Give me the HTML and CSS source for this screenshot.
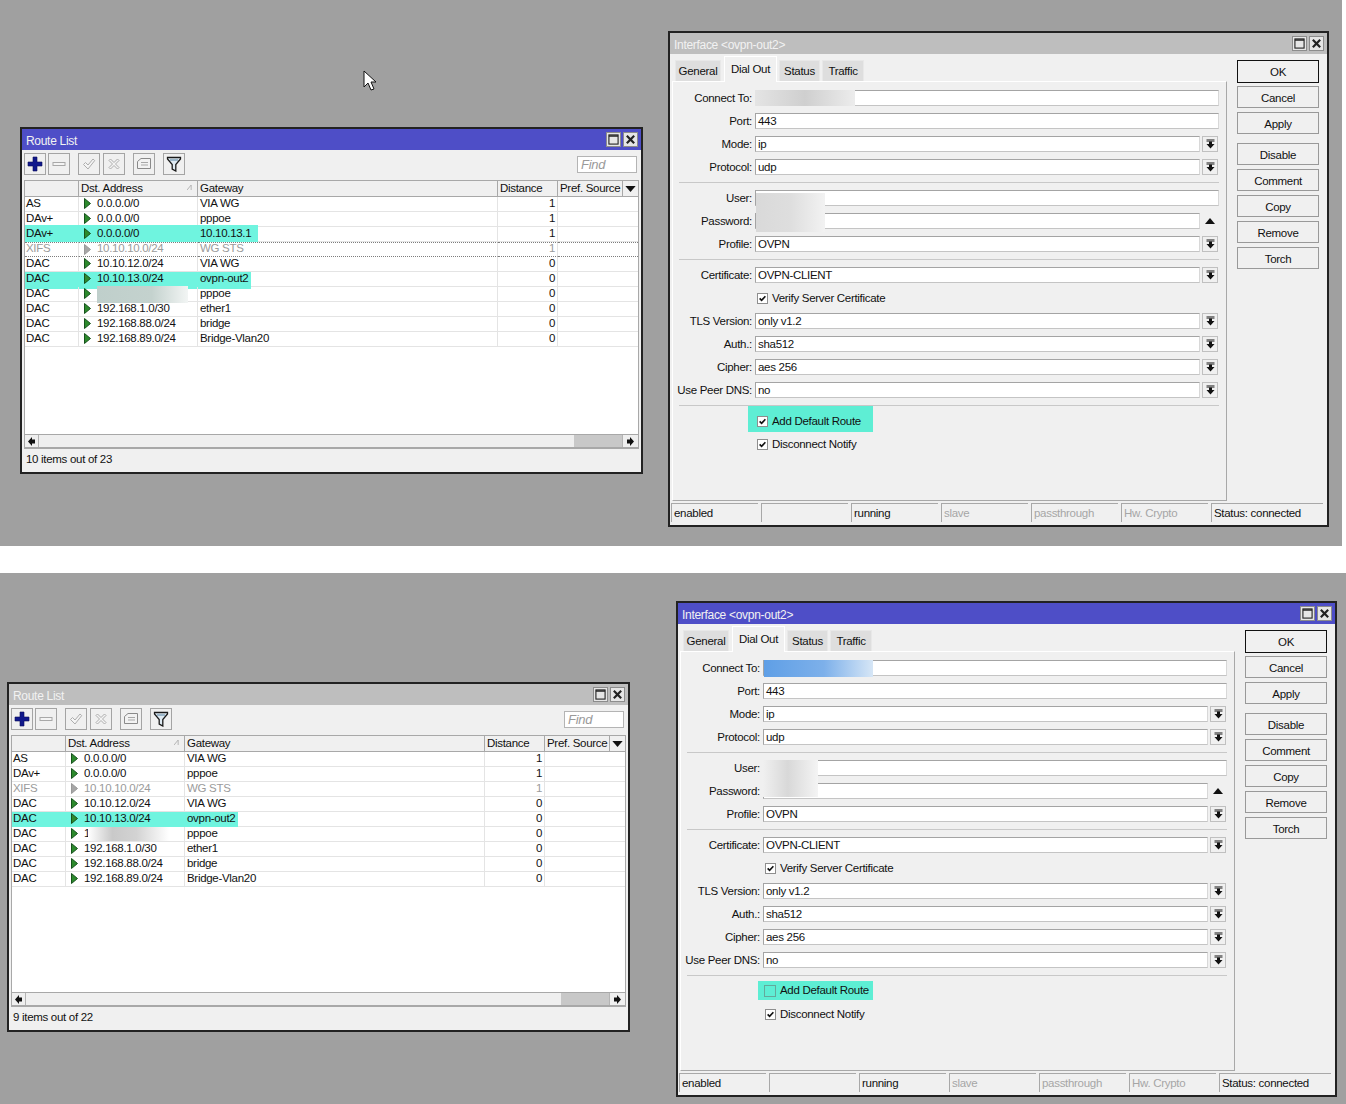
FILE: index.html
```html
<!DOCTYPE html>
<html lang="en">
<head>
<meta charset="utf-8">
<title>Route List and Interface ovpn-out2</title>
<link rel="stylesheet" href="styles.css">
</head>
<body>
<svg class="defs" aria-hidden="true">
  <symbol id="i-plus" viewBox="0 0 16 16"><path d="M6 1h4v5h5v4h-5v5H6v-5H1V6h5z" fill="#10188c" stroke="#0a0f5c" stroke-width=".6"/></symbol>
  <symbol id="i-minus" viewBox="0 0 16 16"><rect x="2" y="6.5" width="12" height="3" fill="#f4f4f4" stroke="#a8a8a8"/></symbol>
  <symbol id="i-check" viewBox="0 0 16 16"><path d="M2.5 8.5l2-2 2.5 2.5 5-6 1.7 1.6L7 13z" fill="#f4f4f4" stroke="#adadad"/></symbol>
  <symbol id="i-cross" viewBox="0 0 16 16"><path d="M3 4.5L4.5 3 8 6.5 11.5 3 13 4.5 9.5 8l3.5 3.5-1.5 1.5L8 9.5 4.5 13 3 11.5 6.5 8z" fill="#f4f4f4" stroke="#adadad"/></symbol>
  <symbol id="i-note" viewBox="0 0 16 16"><path d="M1.5 5.5L5 2.5h9.5v10h-13z" fill="#f2f2f2" stroke="#8a8a8a"/><path d="M5 6.5h7M5 9h7" stroke="#a8a8a8"/></symbol>
  <symbol id="i-filter" viewBox="0 0 16 16"><path d="M1.5 1.5h13v1.5L9.8 8.5v6.5L6.2 13V8.5L1.5 3z" fill="#dfeaf2" stroke="#1a1a1a" stroke-width="1.3"/><path d="M4 4h8" stroke="#6f93ad" stroke-width="1.2"/></symbol>
  <symbol id="i-run" viewBox="0 0 7 11"><path d="M.5.5l6 5-6 5z" fill="#2c8a2c" stroke="#17521d"/></symbol>
  <symbol id="i-rung" viewBox="0 0 7 11"><path d="M.5.5l6 5-6 5z" fill="#a6a6a6" stroke="#999"/></symbol>
  <symbol id="i-max" viewBox="0 0 12 12"><rect x="1" y="1" width="10" height="10" fill="none" stroke="#222" stroke-width="1.2"/><path d="M1 2.2h10" stroke="#222" stroke-width="1.6"/></symbol>
  <symbol id="i-close" viewBox="0 0 12 12"><path d="M2 2l8 8M10 2l-8 8" stroke="#222" stroke-width="2.4"/></symbol>
  <symbol id="i-drop" viewBox="0 0 9 10"><path d="M.5 0h8M.5 2h8" stroke="#111"/><path d="M3 2.5h3V5h2.5L4.5 9.5.5 5H3z" fill="#111"/></symbol>
  <symbol id="i-up" viewBox="0 0 10 6"><path d="M5 0l5 6H0z" fill="#111"/></symbol>
  <symbol id="i-down" viewBox="0 0 12 7"><path d="M0 0h12L6 7z" fill="#111"/></symbol>
  <symbol id="i-left" viewBox="0 0 7 9"><path d="M0 4.5L4 0v2.5h3v4H4V9z" fill="#111"/></symbol>
  <symbol id="i-right" viewBox="0 0 7 9"><path d="M7 4.5L3 0v2.5H0v4h3V9z" fill="#111"/></symbol>
  <symbol id="i-tick" viewBox="0 0 11 11"><path d="M2 5.3l2.4 2.5L9 2.8" fill="none" stroke="#111" stroke-width="2"/></symbol>
</svg>

<section class="desk desk-top">
  <svg class="cursor" viewBox="0 0 13 21" aria-hidden="true"><path d="M1 1v16l4-4 3 7 3-1-3-7h5z" fill="#fff" stroke="#111"/></svg>

  <div class="win route route-top">
    <header class="title active"><span>Route List</span><span class="title-btns"><i class="tb"><svg><use href="#i-max"/></svg></i><i class="tb"><svg><use href="#i-close"/></svg></i></span></header>
    <div class="toolbar">
      <button class="tool"><svg><use href="#i-plus"/></svg></button><button class="tool"><svg><use href="#i-minus"/></svg></button>
      <button class="tool g1"><svg><use href="#i-check"/></svg></button><button class="tool g1b"><svg><use href="#i-cross"/></svg></button>
      <button class="tool g2"><svg><use href="#i-note"/></svg></button><button class="tool g3"><svg><use href="#i-filter"/></svg></button>
      <span class="find">Find</span>
    </div>
    <div class="table">
      <div class="row head"><div></div><div class="c-dst">Dst. Address<svg class="sort" viewBox="0 0 6 6"><path d="M0 6L5 0v6" fill="none" stroke="#aaa"/></svg></div><div>Gateway</div><div>Distance</div><div>Pref. Source</div><div class="c-menu"><svg><use href="#i-down"/></svg></div></div>
      <div class="row"><div>AS</div><div class="c-dst"><svg class="run"><use href="#i-run"/></svg>0.0.0.0/0</div><div>VIA WG</div><div class="num">1</div><div></div></div>
      <div class="row"><div>DAv+</div><div class="c-dst"><svg class="run"><use href="#i-run"/></svg>0.0.0.0/0</div><div>pppoe</div><div class="num">1</div><div></div></div>
      <div class="row hl-up"><div class="hl">DAv+</div><div class="c-dst hl"><svg class="run"><use href="#i-run"/></svg>0.0.0.0/0</div><div><span class="hl gw-a">10.10.13.1</span></div><div class="num">1</div><div></div></div>
      <div class="row off dotted"><div>XIFS</div><div class="c-dst"><svg class="run"><use href="#i-rung"/></svg>10.10.10.0/24</div><div>WG STS</div><div class="num">1</div><div></div></div>
      <div class="row"><div>DAC</div><div class="c-dst"><svg class="run"><use href="#i-run"/></svg>10.10.12.0/24</div><div>VIA WG</div><div class="num">0</div><div></div></div>
      <div class="row hl-dn"><div class="hl">DAC</div><div class="c-dst hl"><svg class="run"><use href="#i-run"/></svg>10.10.13.0/24</div><div><span class="hl gw-b">ovpn-out2</span></div><div class="num">0</div><div></div></div>
      <div class="row"><div>DAC</div><div class="c-dst"><svg class="run"><use href="#i-run"/></svg><span class="smear smear-a"></span></div><div>pppoe</div><div class="num">0</div><div></div></div>
      <div class="row"><div>DAC</div><div class="c-dst"><svg class="run"><use href="#i-run"/></svg>192.168.1.0/30</div><div>ether1</div><div class="num">0</div><div></div></div>
      <div class="row"><div>DAC</div><div class="c-dst"><svg class="run"><use href="#i-run"/></svg>192.168.88.0/24</div><div>bridge</div><div class="num">0</div><div></div></div>
      <div class="row"><div>DAC</div><div class="c-dst"><svg class="run"><use href="#i-run"/></svg>192.168.89.0/24</div><div>Bridge-Vlan20</div><div class="num">0</div><div></div></div>
    </div>
    <div class="scroll"><i class="sb"><svg><use href="#i-left"/></svg></i><span class="track"></span><span class="thumb"></span><i class="sb"><svg><use href="#i-right"/></svg></i></div>
    <div class="foot">10 items out of 23</div>
  </div>

  <div class="win iface iface-top">
    <header class="title idle"><span>Interface &lt;ovpn-out2&gt;</span><span class="title-btns"><i class="tb"><svg><use href="#i-max"/></svg></i><i class="tb"><svg><use href="#i-close"/></svg></i></span></header>
    <div class="main">
      <div class="left">
        <nav class="tabs"><span class="tab t-gen">General</span><span class="tab cur">Dial Out</span><span class="tab t-st">Status</span><span class="tab t-tr">Traffic</span></nav>
        <div class="form">
          <div class="frow"><label>Connect To:</label><span class="field"></span></div>
          <div class="frow"><label>Port:</label><span class="field">443</span></div>
          <div class="frow"><label>Mode:</label><span class="field">ip</span><i class="dd"><svg><use href="#i-drop"/></svg></i></div>
          <div class="frow"><label>Protocol:</label><span class="field">udp</span><i class="dd"><svg><use href="#i-drop"/></svg></i></div>
          <hr class="sep">
          <div class="frow"><label>User:</label><span class="field"></span></div>
          <div class="frow"><label>Password:</label><span class="field"></span><i class="dd flat"><svg class="up"><use href="#i-up"/></svg></i></div>
          <div class="frow"><label>Profile:</label><span class="field">OVPN</span><i class="dd"><svg><use href="#i-drop"/></svg></i></div>
          <hr class="sep">
          <div class="frow"><label>Certificate:</label><span class="field">OVPN-CLIENT</span><i class="dd"><svg><use href="#i-drop"/></svg></i></div>
          <div class="frow check"><i class="box"><svg><use href="#i-tick"/></svg></i>Verify Server Certificate</div>
          <div class="frow"><label>TLS Version:</label><span class="field">only v1.2</span><i class="dd"><svg><use href="#i-drop"/></svg></i></div>
          <div class="frow"><label>Auth.:</label><span class="field">sha512</span><i class="dd"><svg><use href="#i-drop"/></svg></i></div>
          <div class="frow"><label>Cipher:</label><span class="field">aes 256</span><i class="dd"><svg><use href="#i-drop"/></svg></i></div>
          <div class="frow"><label>Use Peer DNS:</label><span class="field">no</span><i class="dd"><svg><use href="#i-drop"/></svg></i></div>
          <hr class="sep">
          <div class="frow check mark-big"><i class="box"><svg><use href="#i-tick"/></svg></i>Add Default Route</div>
          <div class="frow check"><i class="box"><svg><use href="#i-tick"/></svg></i>Disconnect Notify</div>
          <span class="smear smear-b"></span>
          <span class="smear smear-c"></span>
        </div>
      </div>
      <div class="side">
        <button class="btn ok">OK</button><button class="btn">Cancel</button><button class="btn gap-end">Apply</button>
        <button class="btn">Disable</button><button class="btn">Comment</button><button class="btn">Copy</button><button class="btn">Remove</button><button class="btn">Torch</button>
      </div>
    </div>
    <div class="status"><span>enabled</span><span></span><span>running</span><span class="dim">slave</span><span class="dim">passthrough</span><span class="dim">Hw. Crypto</span><span class="wide">Status: connected</span></div>
  </div>
</section>

<section class="desk desk-bottom">
  <div class="win route route-bottom">
    <header class="title idle"><span>Route List</span><span class="title-btns"><i class="tb"><svg><use href="#i-max"/></svg></i><i class="tb"><svg><use href="#i-close"/></svg></i></span></header>
    <div class="toolbar">
      <button class="tool"><svg><use href="#i-plus"/></svg></button><button class="tool"><svg><use href="#i-minus"/></svg></button>
      <button class="tool g1"><svg><use href="#i-check"/></svg></button><button class="tool g1b"><svg><use href="#i-cross"/></svg></button>
      <button class="tool g2"><svg><use href="#i-note"/></svg></button><button class="tool g3"><svg><use href="#i-filter"/></svg></button>
      <span class="find">Find</span>
    </div>
    <div class="table">
      <div class="row head"><div></div><div class="c-dst">Dst. Address<svg class="sort" viewBox="0 0 6 6"><path d="M0 6L5 0v6" fill="none" stroke="#aaa"/></svg></div><div>Gateway</div><div>Distance</div><div>Pref. Source</div><div class="c-menu"><svg><use href="#i-down"/></svg></div></div>
      <div class="row"><div>AS</div><div class="c-dst"><svg class="run"><use href="#i-run"/></svg>0.0.0.0/0</div><div>VIA WG</div><div class="num">1</div><div></div></div>
      <div class="row"><div>DAv+</div><div class="c-dst"><svg class="run"><use href="#i-run"/></svg>0.0.0.0/0</div><div>pppoe</div><div class="num">1</div><div></div></div>
      <div class="row off"><div>XIFS</div><div class="c-dst"><svg class="run"><use href="#i-rung"/></svg>10.10.10.0/24</div><div>WG STS</div><div class="num">1</div><div></div></div>
      <div class="row"><div>DAC</div><div class="c-dst"><svg class="run"><use href="#i-run"/></svg>10.10.12.0/24</div><div>VIA WG</div><div class="num">0</div><div></div></div>
      <div class="row"><div class="hl">DAC</div><div class="c-dst hl"><svg class="run"><use href="#i-run"/></svg>10.10.13.0/24</div><div><span class="hl gw-b">ovpn-out2</span></div><div class="num">0</div><div></div></div>
      <div class="row"><div>DAC</div><div class="c-dst"><svg class="run"><use href="#i-run"/></svg>1<span class="smear smear-d"></span></div><div>pppoe</div><div class="num">0</div><div></div></div>
      <div class="row"><div>DAC</div><div class="c-dst"><svg class="run"><use href="#i-run"/></svg>192.168.1.0/30</div><div>ether1</div><div class="num">0</div><div></div></div>
      <div class="row"><div>DAC</div><div class="c-dst"><svg class="run"><use href="#i-run"/></svg>192.168.88.0/24</div><div>bridge</div><div class="num">0</div><div></div></div>
      <div class="row"><div>DAC</div><div class="c-dst"><svg class="run"><use href="#i-run"/></svg>192.168.89.0/24</div><div>Bridge-Vlan20</div><div class="num">0</div><div></div></div>
    </div>
    <div class="scroll"><i class="sb"><svg><use href="#i-left"/></svg></i><span class="track"></span><span class="thumb"></span><i class="sb"><svg><use href="#i-right"/></svg></i></div>
    <div class="foot">9 items out of 22</div>
  </div>

  <div class="win iface iface-bottom">
    <header class="title active"><span>Interface &lt;ovpn-out2&gt;</span><span class="title-btns"><i class="tb"><svg><use href="#i-max"/></svg></i><i class="tb"><svg><use href="#i-close"/></svg></i></span></header>
    <div class="main">
      <div class="left">
        <nav class="tabs"><span class="tab t-gen">General</span><span class="tab cur">Dial Out</span><span class="tab t-st">Status</span><span class="tab t-tr">Traffic</span></nav>
        <div class="form">
          <div class="frow"><label>Connect To:</label><span class="field"></span></div>
          <div class="frow"><label>Port:</label><span class="field">443</span></div>
          <div class="frow"><label>Mode:</label><span class="field">ip</span><i class="dd"><svg><use href="#i-drop"/></svg></i></div>
          <div class="frow"><label>Protocol:</label><span class="field">udp</span><i class="dd"><svg><use href="#i-drop"/></svg></i></div>
          <hr class="sep">
          <div class="frow"><label>User:</label><span class="field"></span></div>
          <div class="frow"><label>Password:</label><span class="field"></span><i class="dd flat"><svg class="up"><use href="#i-up"/></svg></i></div>
          <div class="frow"><label>Profile:</label><span class="field">OVPN</span><i class="dd"><svg><use href="#i-drop"/></svg></i></div>
          <hr class="sep">
          <div class="frow"><label>Certificate:</label><span class="field">OVPN-CLIENT</span><i class="dd"><svg><use href="#i-drop"/></svg></i></div>
          <div class="frow check"><i class="box"><svg><use href="#i-tick"/></svg></i>Verify Server Certificate</div>
          <div class="frow"><label>TLS Version:</label><span class="field">only v1.2</span><i class="dd"><svg><use href="#i-drop"/></svg></i></div>
          <div class="frow"><label>Auth.:</label><span class="field">sha512</span><i class="dd"><svg><use href="#i-drop"/></svg></i></div>
          <div class="frow"><label>Cipher:</label><span class="field">aes 256</span><i class="dd"><svg><use href="#i-drop"/></svg></i></div>
          <div class="frow"><label>Use Peer DNS:</label><span class="field">no</span><i class="dd"><svg><use href="#i-drop"/></svg></i></div>
          <hr class="sep">
          <div class="frow check mark-small"><i class="box empty"></i>Add Default Route</div>
          <div class="frow check"><i class="box"><svg><use href="#i-tick"/></svg></i>Disconnect Notify</div>
          <span class="smear smear-e"></span>
          <span class="smear smear-f"></span>
        </div>
      </div>
      <div class="side">
        <button class="btn ok">OK</button><button class="btn">Cancel</button><button class="btn gap-end">Apply</button>
        <button class="btn">Disable</button><button class="btn">Comment</button><button class="btn">Copy</button><button class="btn">Remove</button><button class="btn">Torch</button>
      </div>
    </div>
    <div class="status"><span>enabled</span><span></span><span>running</span><span class="dim">slave</span><span class="dim">passthrough</span><span class="dim">Hw. Crypto</span><span class="wide">Status: connected</span></div>
  </div>
</section>
</body>
</html>
```
FILE: styles.css
```css
* { box-sizing: border-box; }
html, body { margin: 0; padding: 0; background: #fff; }
body {
  width: 1346px;
  height: 1104px;
  overflow: hidden;
  font: 11.5px/15px "Liberation Sans", Arial, sans-serif;
  letter-spacing: -.3px;
  color: #111;
}
.defs { position: absolute; width: 0; height: 0; }
svg { display: block; }

.desk { position: relative; background: #a0a0a0; }
.desk-top { width: 1342px; height: 546px; }
.desk-bottom { width: 1346px; height: 531px; margin-top: 27px; }
.cursor { position: absolute; left: 363px; top: 70px; width: 13px; height: 21px; }

.win {
  position: absolute;
  display: flex;
  flex-direction: column;
  background: #f0f0f0;
  border: 2px solid #222;
}
.route { width: 623px; }
.route-top { left: 20px; top: 127px; height: 347px; }
.route-bottom { left: 7px; top: 109px; height: 350px; }
.iface { width: 661px; height: 496px; }
.iface-top { left: 668px; top: 31px; }
.iface-bottom { left: 676px; top: 28px; }

.title {
  flex: none;
  height: 21px;
  display: flex;
  align-items: center;
  justify-content: space-between;
  padding: 0 3px 0 4px;
  color: #f2f2f2;
  font-size: 12px;
}
.title > span:first-child { position: relative; top: 2px; }
.title.active { background: #4e4ec7; }
.title.idle { background: #bebebe; }
.title-btns { display: flex; gap: 2px; }
.tb {
  display: flex;
  align-items: center;
  justify-content: center;
  width: 15px;
  height: 15px;
  background: #e6e6e6;
  border: 1px solid #8c8c8c;
}
.tb svg { width: 11px; height: 11px; }

.toolbar {
  flex: none;
  height: 30px;
  display: flex;
  align-items: flex-start;
  gap: 2px;
  padding: 3px 4px 0 2px;
}
.tool {
  width: 22px;
  height: 22px;
  padding: 2px;
  background: #f0f0f0;
  border: 1px solid #a4a4a4;
}
.tool svg { width: 16px; height: 16px; }
.tool.g1, .tool.g2, .tool.g3 { margin-left: 6px; }
.tool.g1b { margin-left: 1px; }
.find {
  margin: 3px 0 0 auto;
  width: 60px;
  height: 17px;
  padding-left: 3px;
  background: #fff;
  border: 1px solid #b4b4b4;
  color: #9a9a9a;
  font-style: italic;
  font-size: 13px;
}

.table {
  flex: 1;
  margin: 0 2px;
  background: #fff;
  border: 1px solid #a8a8a8;
  border-bottom: 0;
}
.row {
  display: grid;
  grid-template-columns: 54px 119px 300px 60px 65px 15px;
  height: 15px;
  white-space: nowrap;
}
.row > div {
  position: relative;
  padding-left: 1px;
  height: 15px;
  line-height: 12px;
  border-right: 1px solid #e4e4e4;
  border-bottom: 1px solid #e4e4e4;
}
.row > div:nth-child(3) { padding-left: 2px; }
.row > div:nth-child(5) { border-right: 0; }
.row > div:nth-child(5):last-child { grid-column: span 2; }
.row .num { padding: 0 2px 0 0; text-align: right; }
.row.head { height: 16px; }
.row.head > div {
  height: 16px;
  padding-left: 2px;
  line-height: 15px;
  background: #f0f0f0;
  border-right-color: #a8a8a8;
  border-bottom-color: #a8a8a8;
}
.row.head > div:nth-child(5) { border-right: 1px solid #a8a8a8; }
.row.head > .c-menu { display: flex; align-items: center; justify-content: center; padding: 0; border-right: 0; }
.c-menu svg { width: 11px; height: 6px; }
.sort { position: absolute; right: 5px; top: 4px; width: 5px; height: 5px; }
.row > .c-dst { padding-left: 18px; }
.run { position: absolute; left: 5px; top: 1px; width: 7px; height: 11px; }
.off { color: #9b9b9b; }
.row.dotted > div { border-top: 1px dotted #7d7d7d; border-bottom: 1px dotted #7d7d7d; line-height: 11px; }
.row > .hl, .hl { background: #6ff4df; }
.row > .hl { border-right-color: #6ff4df; border-bottom-color: #6ff4df; }
.row > div > .hl { display: block; height: 15px; margin-left: -2px; padding-left: 2px; }
.hl-up .hl { box-shadow: 0 -2px 0 #6ff4df; }
.hl-dn .hl { box-shadow: 0 2px 0 #6ff4df; }
.gw-a { width: 60px; }
.gw-b { width: 53px; }

.smear { position: absolute; display: block; }
.smear-a { left: 18px; top: -1px; width: 91px; height: 17px; background: linear-gradient(90deg, #bfcfcb, #c4d2ce 60%, #f2f5f4); }
.smear-d { left: 22px; top: 0; width: 81px; height: 14px; background: linear-gradient(90deg, #fff, #c9c9c9 30%, #d3d3d3 60%, #fff); }
.smear-b { left: 82px; top: 8px; width: 100px; height: 16px; background: linear-gradient(90deg, #e4e4e4, #cfcfcf 50%, #ececec); }
.smear-c { left: 83px; top: 111px; width: 69px; height: 39px; background: linear-gradient(90deg, #d9d9d9, #dedede 50%, #f2f2f2); }
.smear-e { left: 83px; top: 8px; width: 109px; height: 17px; background: linear-gradient(90deg, #5f9fe6, #7db0ea 55%, #d6e6f6); }
.smear-f { left: 82px; top: 108px; width: 55px; height: 37px; background: linear-gradient(90deg, #f0f0f0, #d8d8d8 45%, #f4f4f4); }

.scroll {
  flex: none;
  height: 15px;
  margin: 0 2px;
  display: flex;
  align-items: stretch;
  background: #efefef;
  border: 1px solid #a8a8a8;
  border-bottom-width: 2px;
}
.track { flex: 1; }
.thumb { width: 48px; background: #c8c8c8; }
.sb {
  flex: none;
  width: 14px;
  display: flex;
  align-items: center;
  justify-content: center;
  border-right: 1px solid #b4b4b4;
}
.sb:last-child { border-right: 0; border-left: 1px solid #b4b4b4; width: 16px; }
.sb svg { width: 7px; height: 9px; }
.foot { flex: none; height: 23px; padding: 2px 0 0 4px; line-height: 16px; }

.main { flex: 1; display: flex; min-height: 0; }
.left { width: 557px; display: flex; flex-direction: column; }
.tabs { flex: none; height: 28px; display: flex; padding-left: 5px; align-items: flex-end; }
.tab {
  height: 21px;
  margin-bottom: 1px;
  padding-top: 3px;
  text-align: center;
  background: #dedede;
  border: 1px solid #e8e8e8;
  border-bottom: 0;
}
.t-gen { width: 46px; }
.t-st { width: 41px; margin-left: 2px; }
.t-tr { width: 42px; margin-left: 2px; }
.tab.cur {
  width: 53px;
  height: 26px;
  margin: 0 0 0 3px;
  padding-top: 5px;
  background: #f0f0f0;
  border: 1px solid #fff;
  border-bottom: 0;
  position: relative;
  z-index: 1;
}
.form {
  flex: 1;
  position: relative;
  display: flex;
  flex-direction: column;
  gap: 7px;
  padding: 8px 7px 0 82px;
  margin: -1px 0 0 2px;
  background: #f0f0f0;
  border-top: 1px solid #fff;
  border-left: 1px solid #fff;
  border-right: 1px solid #a8a8a8;
  border-bottom: 1px solid #a8a8a8;
}
.frow { position: relative; display: flex; height: 16px; flex: none; gap: 2px; }
.frow label {
  position: absolute;
  right: 100%;
  top: 0;
  margin-right: 3px;
  white-space: nowrap;
  line-height: 16px;
}
.field {
  flex: 1;
  height: 16px;
  padding-left: 2px;
  line-height: 15px;
  background: #fff;
  border: 1px solid #a4a4a4;
  border-right-color: #d8d8d8;
  border-bottom-color: #c4c4c4;
}
.dd {
  flex: none;
  width: 16px;
  height: 16px;
  display: flex;
  align-items: center;
  justify-content: center;
  border: 1px solid #c0c0c0;
  margin-right: 1px;
}
.dd.flat { border: 0; }
.dd svg { width: 9px; height: 10px; }
.dd svg.up { width: 10px; height: 6px; }
.sep {
  flex: none;
  width: 540px;
  height: 1px;
  margin: 0 0 0 -76px;
  border: 0;
  background: #c8c8c8;
}
.check { padding-left: 2px; align-items: center; gap: 4px; white-space: nowrap; }
.box {
  flex: none;
  width: 11px;
  height: 11px;
  background: #fff;
  border: 1px solid #8e8e8e;
  display: block;
}
.box svg { width: 9px; height: 9px; }
.box.empty { background: transparent; border-color: #64a99c; width: 12px; height: 12px; }
.mark-big {
  height: 26px;
  width: 125px;
  margin: -7px 0 -3px -7px;
  padding: 4px 0 0 9px;
  background: #5eeed4;
}
.mark-small {
  height: 19px;
  width: 115px;
  margin: -2px 0 -1px -5px;
  padding-left: 6px;
  background: #5eeed4;
}

.side { flex: 1; display: flex; flex-direction: column; gap: 4px; padding: 6px 0 0 10px; }
.btn {
  width: 82px;
  height: 22px;
  padding: 2px 0 0;
  background: #f0f0f0;
  border: 1px solid #999;
  font: inherit;
  letter-spacing: inherit;
  color: #111;
}
.btn.ok { height: 23px; border-color: #111; margin-bottom: -1px; }
.btn.gap-end { margin-bottom: 5px; }

.status {
  flex: none;
  height: 24px;
  display: flex;
  gap: 3px;
  padding: 2px 0 0 1px;
}
.status span {
  width: 87px;
  height: 19px;
  padding-left: 2px;
  line-height: 18px;
  border-top: 1px solid #a8a8a8;
  border-left: 1px solid #a8a8a8;
}
.status .wide { width: 112px; }
.status .dim { color: #a6a6a6; }
```
